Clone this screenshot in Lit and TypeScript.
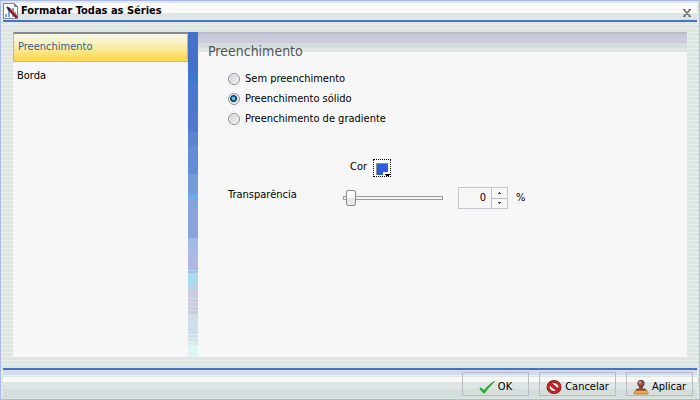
import { LitElement, html, css, svg } from "lit";
import { customElement, state } from "lit/decorators.js";

const chartIcon = svg`<svg viewBox="0 0 16 16" width="16" height="16" shape-rendering="crispEdges">
  <path d="M1 .5h10l3 3V15.500H.5V.5z" fill="#fdfdfd" stroke="#85858d"/>
  <path d="M11 .5v3h3" fill="none" stroke="#85858d"/>
  <path d="M2 11h2v3H2zM5 7h2v7H5zM9 5h2v9H9zM12 9h1v5h-1z" fill="#7b9fe0"/>
  <g shape-rendering="auto"><path d="M5 5l9 9.500" stroke="#5c1010" stroke-width="2.600"/>
  <path d="M7 6l7 7.500" stroke="#e03030" stroke-width="1.200"/><path d="M4 4l2.500 2.500" stroke="#222" stroke-width="1.500"/></g>
</svg>`;

const checkIcon = svg`<svg viewBox="0 0 16 16" width="16" height="16">
  <path d="M.8 9.800L2 8.800l3 3C8 8 11 5 15.500 2.500 11.500 6 8.500 9.500 5.600 14H4.600z" fill="#12c51c" stroke="#07910d" stroke-width=".7"/>
</svg>`;

const cancelIcon = svg`<svg viewBox="0 0 16 16" width="16" height="16">
  <ellipse cx="8" cy="8" rx="6" ry="5.400" fill="#f4e9e9" stroke="#7c1010" stroke-width="3"/>
  <ellipse cx="8" cy="8" rx="6" ry="5.400" fill="none" stroke="#cf2929" stroke-width="1.800"/>
  <path d="M3.800 4.500l8.500 7" stroke="#7c1010" stroke-width="3"/><path d="M3.500 4.300l9 7.400" stroke="#cf2929" stroke-width="1.800"/>
</svg>`;

const stampIcon = svg`<svg viewBox="0 0 16 16" width="16" height="16">
  <path d="M6.800 6h2.400l.6 4h2.700l.5 2H3l.5-2h2.700z" fill="#8c4a40" stroke="#582a26" stroke-width=".6"/>
  <circle cx="8" cy="4.500" r="3.200" fill="#a05048" stroke="#5b2424" stroke-width=".8"/>
  <circle cx="7" cy="3.500" r="1.200" fill="#dba39b"/>
  <path d="M2.500 11.500h11l1.500 2v1.500H1v-1.500z" fill="#f0a848" stroke="#a96a20" stroke-width=".7"/>
</svg>`;

@customElement("app-root")
export class AppRoot extends LitElement {
  @state() private section = "Preenchimento";
  @state() private fill = 1;
  @state() private amount = 0;

  static styles = css`
    :host {
      display: flex; flex-direction: column; box-sizing: border-box; min-height: 100vh;
      border: 1px solid #a9b9e8; color: #000;
      font: 11px/16px "DejaVu Sans Condensed", "DejaVu Sans", sans-serif;
      background: repeating-linear-gradient(#dde6e5 0 3px, #edf0e9 3px 4px);
    }
    * { box-sizing: border-box; }
    button, input { font: inherit; color: inherit; margin: 0; }
    .title {
      display: flex; align-items: center; gap: 2px; height: 21px; margin: 0 2px; padding-right: 5px;
      border-bottom: 2px solid #4472c8;
      background: linear-gradient(#dfe7f3 0 2px, #fafafa 2px 12px, #dde6e5 12px);
    }
    h1 { flex: 1; margin: 0; font-size: 11px; line-height: 16px; font-weight: 700; }
    .close { display: flex; border: 0; padding: 0; background: none; margin-top: 5px; }
    .body { flex: 1; display: flex; padding: 10px 12px 11px; min-height: 0; }
    .list { width: 175px; background: #f7f7f7; display: flex; flex-direction: column; }
    .item { height: 28px; border: 1px solid transparent; padding: 0 3px; background: none; text-align: left; }
    .item.on {
      height: 30px; padding: 0 4px 2px; color: #3c5a8c; border-color: #a9b7de; border-top: 2px solid #858794;
      background: linear-gradient(#f7f6dc 0 3px, #f9f3c6 8px, #fbea9c 15px, #fddc5c 23px, #ffd84e);
    }
    .strip {
      width: 10px;
      background: linear-gradient(#4472c8 0 42px, #3a7bd0 42px 52px, #4a79ce 52px 82px, #507ad0 82px 100px,
        #5a85d0 100px 114px, #648dd8 114px 142px, #739cd6 142px 162px, #62adfa 162px 166px, #84a3dc 166px 176px,
        #8ca2dc 176px 206px, #a2bae6 206px 218px, #adb8e6 218px 238px, #a8dcec 238px 239px, #adb8e6 239px 241px,
        #a9dcec 241px 254px, #c8c8dc 254px 255px, #a9dcec 255px 257px, #cdcbde 257px 266px, #cfddec 266px 267px,
        #cdcbde 267px 270px, #cfddec 270px 271px, #cdcbde 271px 274px, #cfddec 274px 275px, #cdcbde 275px 278px,
        #cfddec 278px 279px, #cdcbde 279px 282px, #d6ddda 282px 285px, #cfddec 285px 302px, #dcf5f5 302px 303px,
        #cfddec 303px 306px, #dcf5f5 306px 307px, #cfddec 307px 308px, #dde6e5 308px 310px, #dcf5f5 310px 311px,
        #dde6e5 311px 313px, #dcf5f5 313px);
    }
    .panel {
      flex: 1; padding: 10px;
      background: linear-gradient(#bdbbcc 0 2px, #c6cad7 2px 6px, #cccadc 6px 11px, #d5dddd 11px 16px, #dfe7e6 16px 20px, #f7f7f7 20px);
    }
    h2 { margin: 0; font-size: 14px; line-height: 18px; font-weight: 400; color: #555; }
    fieldset { border: 0; margin: 11px 0 0; padding: 0 0 0 20px; display: grid; gap: 4px; }
    .option { display: flex; align-items: center; gap: 5px; justify-self: start; }
    .option input {
      appearance: none; width: 12px; height: 12px; border: 1px solid #8c8f94; border-radius: 50%;
      background: linear-gradient(135deg, #c8cdd2, #f8f8f8); box-shadow: inset 0 0 0 1px #f2f2f2;
    }
    .option input:checked { background: radial-gradient(circle at 45% 45%, #6cd0f8 0 1px, #12689c 2px, #0c2c50 3px, #dfe4e8 4px); }
    .color { display: flex; align-items: center; gap: 6px; margin: 32px 0 0 142px; }
    .color span { padding-bottom: 2px; }
    .swatch { width: 18px; height: 18px; padding: 0; border: 1px dotted #000; background: #fff; display: flex; }
    .row { display: flex; align-items: center; margin: 10px 0 0 20px; }
    .name { width: 115px; align-self: flex-start; }
    .slider { appearance: none; width: 100px; height: 16px; background: none; }
    .slider::-webkit-slider-runnable-track { height: 4px; border: 1px solid #9a9da0; background: #f4f4f4; }
    .slider::-webkit-slider-thumb {
      appearance: none; width: 10px; height: 16px; margin: -7px 0 0 2px; border: 1px solid #8c8c90; border-radius: 2px;
      background: linear-gradient(#fff 0 6px, #e9e9e2 7px);
    }
    .spin { display: flex; width: 50px; height: 22px; margin: 0 8px 0 15px; border: 1px solid #c6c6cc; }
    .spin input { width: 32px; min-width: 0; padding: 0 5px 0 0; border: 0; background: none; text-align: right; }
    .steps { flex: 1; display: grid; border-left: 1px solid #c0c0cc; }
    .steps button { display: grid; place-items: center; border: 1px solid #c0c0cc; border-width: 0 0 1px; padding: 0; background: #f8f8f8; }
    .steps button + button { border-width: 0; }
    .foot {
      display: flex; justify-content: flex-end; gap: 10px; margin: 0 2px; padding: 2px 4px 0 0; height: 31px;
      border-top: 2px solid #4472c8; border-bottom: 1px solid #dde6e5;
      background: linear-gradient(#cfdded 0 5px, #e4f2f4 5px 6px, #dde6e5 6px 7px, #f9f9f7 7px 12px, #dde6e5 12px 19px, #d5dddd 19px);
    }
    .foot button {
      display: flex; align-items: center; justify-content: center; gap: 3px; width: 67px; height: 24px; padding: 5px 0 0;
      border: 1px solid #b9b9c8; background: none;
    }
    .foot .mid { width: 77px; }
  `;

  private step(d: number) {
    this.amount = Math.max(0, Math.min(100, this.amount + d));
  }

  render() {
    return html`
      <header class="title">
        ${chartIcon}
        <h1>Formatar Todas as Séries</h1>
        <button class="close" aria-label="Fechar">
          <svg viewBox="0 0 10 8" width="10" height="8"><path d="M1 .5h2.500M6.500.5H9M2 1l6 6M8 1L2 7M1 7.500h2.500M6.500 7.500H9" stroke="#707070" stroke-width="1.600" fill="none"/></svg>
        </button>
      </header>
      <main class="body">
        <nav class="list">
          ${["Preenchimento", "Borda"].map(
            (n) => html`<button class="item ${n === this.section ? "on" : ""}" @click=${() => (this.section = n)}>${n}</button>`
          )}
        </nav>
        <div class="strip"></div>
        <section class="panel">
          <h2>Preenchimento</h2>
          <fieldset aria-label="Preenchimento">
            ${["Sem preenchimento", "Preenchimento sólido", "Preenchimento de gradiente"].map(
              (n, i) => html`<label class="option"><input type="radio" name="fill" .checked=${i === this.fill} @change=${() => (this.fill = i)} />${n}</label>`
            )}
          </fieldset>
          <div class="color">
            <span id="cor">Cor</span>
            <button class="swatch" aria-labelledby="cor">
              <svg viewBox="0 0 16 16" width="16" height="16" shape-rendering="crispEdges"><path d="M2 3h12v9H9v3H2z" fill="#2c5cd8"/><path d="M2 15V3h12" fill="none" stroke="#909090"/><path d="M11 14h5v1h-1v1h-3v-1h-1z"/></svg>
            </button>
          </div>
          <div class="row">
            <label class="name" for="range">Transparência</label>
            <input class="slider" id="range" type="range" .value=${String(this.amount)} @input=${(e: Event) => (this.amount = +(e.target as HTMLInputElement).value)} />
            <div class="spin">
              <input id="pct" inputmode="numeric" .value=${String(this.amount)} @change=${(e: Event) => (this.amount = +(e.target as HTMLInputElement).value || 0)} />
              <div class="steps">
                <button aria-label="Aumentar" @click=${() => this.step(1)}><svg width="3" height="2" viewBox="0 0 3 2" shape-rendering="crispEdges"><path d="M1 0h1v1h1v1H0V1h1z" fill="#444"/></svg></button>
                <button aria-label="Diminuir" @click=${() => this.step(-1)}><svg width="3" height="2" viewBox="0 0 3 2" shape-rendering="crispEdges"><path d="M0 0h3v1H2v1H1V1H0z" fill="#444"/></svg></button>
              </div>
            </div>
            <label for="pct">%</label>
          </div>
        </section>
      </main>
      <footer class="foot">
        <button>${checkIcon}OK</button>
        <button class="mid">${cancelIcon}Cancelar</button>
        <button>${stampIcon}Aplicar</button>
      </footer>
    `;
  }
}
